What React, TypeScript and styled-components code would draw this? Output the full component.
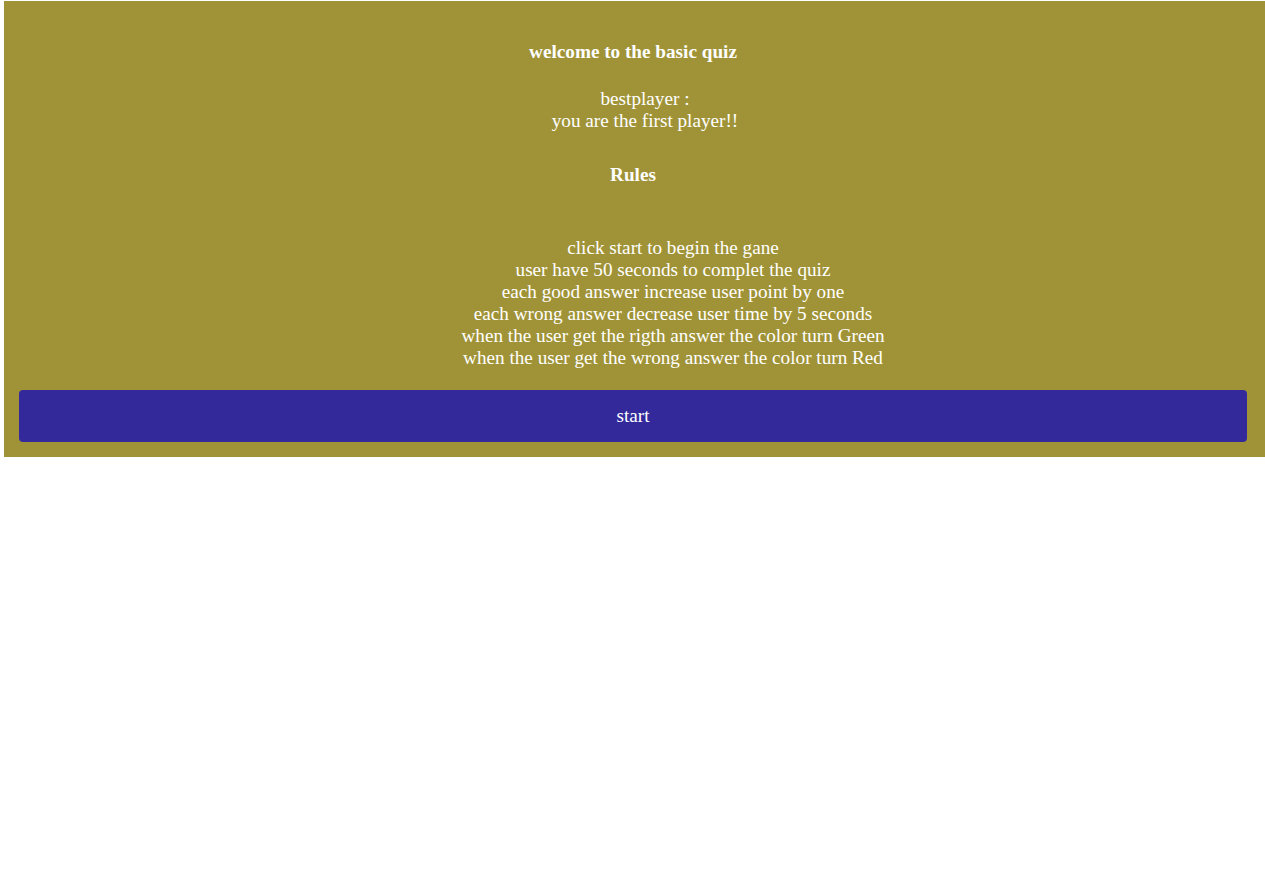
import React from "react";
import styled, { createGlobalStyle } from "styled-components";

const Global = createGlobalStyle`
  html, body { margin: 0; padding: 0; background: #ffffff; }
  body { font-family: "Liberation Serif", "Times New Roman", serif; }
`;

const Panel = styled.main`
  margin: 1px 0 0 4px;
  background: #a09337;
  color: #ffffff;
  padding: 40px 18px 15px 15px;
  display: flex;
  flex-direction: column;
  align-items: stretch;
  font-size: 19.2px;
  line-height: 22px;
`;

const Heading = styled.h4<{ $gapAfter: number }>`
  margin: 0 0 ${(p) => p.$gapAfter}px 0;
  font-size: 19.2px;
  line-height: 22px;
  font-weight: bold;
  text-align: center;
`;

const Best = styled.div`
  margin: 0 0 32px 0;
  padding-left: 24px;
  text-align: center;
`;

const RuleList = styled.ul`
  list-style: none;
  margin: 0 0 21px 0;
  padding-left: 80px;
  text-align: center;
`;

const StartButton = styled.button`
  height: 52px;
  border: none;
  border-radius: 4px;
  background: #33299b;
  color: #ffffff;
  font-family: "Liberation Serif", "Times New Roman", serif;
  font-size: 19.2px;
  cursor: pointer;
`;

const rules = [
  "click start to begin the gane",
  "user have 50 seconds to complet the quiz",
  "each good answer increase user point by one",
  "each wrong answer decrease user time by 5 seconds",
  "when the user get the rigth answer the color turn Green",
  "when the user get the wrong answer the color turn Red",
];

export default function App() {
  return (
    <>
      <Global />
      <Panel>
        <Heading $gapAfter={25}>welcome to the basic quiz</Heading>
        <Best>
          <div>bestplayer :</div>
          <div>you are the first player!!</div>
        </Best>
        <Heading $gapAfter={51}>Rules</Heading>
        <RuleList>
          {rules.map((r) => (
            <li key={r}>{r}</li>
          ))}
        </RuleList>
        <StartButton>start</StartButton>
      </Panel>
    </>
  );
}
